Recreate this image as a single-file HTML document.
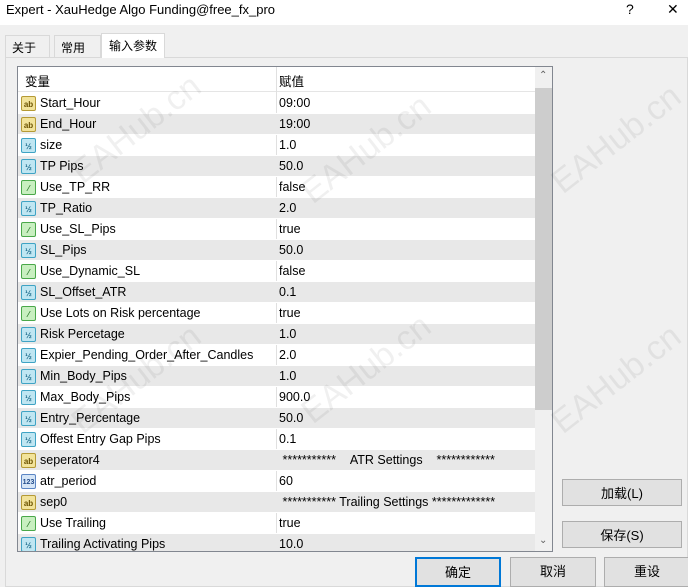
<!DOCTYPE html><html><head><meta charset="utf-8"><style>
*{margin:0;padding:0;box-sizing:border-box}
body{width:688px;height:583px;overflow:hidden;background:#f0f0f0;font-family:"Liberation Sans","Noto Sans CJK SC",sans-serif;font-size:12.5px;color:#000;position:relative}
.title{position:absolute;left:0;top:0;width:688px;height:25px;background:#fff;font-size:13px;padding:2px 0 0 6px}
.tb{position:absolute;top:1px;font-size:14px}
.tab{position:absolute;top:35px;height:22px;border:1px solid #d9d9d9;border-bottom:none;background:#f0f0f0;padding:3px 0 0 6px;font-size:12px}
.panel{position:absolute;left:5px;top:57px;width:683px;height:530px;border:1px solid #d9d9d9;background:#f0f0f0}
.grid{position:absolute;left:17px;top:66px;width:536px;height:486px;border:1px solid #828790;background:#fff;overflow:hidden}
.row{position:absolute;left:0;width:517px;height:21px;border-bottom:1px solid #fff}
.row.g{background:#e8e8e8}
.row span{position:absolute;top:3px}
.n{left:22px}.v{left:261px}
.col{position:absolute;left:258px;top:0;width:1px;height:486px;background:#e0e0e0}
.ic{position:absolute;left:3px;top:3px;width:15px;height:15px;border-radius:2px;font-size:8px;line-height:15px;text-align:center;font-weight:bold}
.ab{background:#f2e39a;border:1px solid #b59a35;color:#6b5200}
.hv{background:#bfe6f2;border:1px solid #3fa3c4;color:#1b6a8a}
.bo{background:#c8efc0;border:1px solid #4aa84a;color:#2a7a2a}
.n3{background:#d6e6f7;border:1px solid #5c86c4;color:#234d8c;font-size:7px}
.sb{position:absolute;left:517px;top:0;width:17px;height:486px;background:#f0f0f0}
.th{position:absolute;left:0;top:21px;width:17px;height:322px;background:#cdcdcd}
.btn{position:absolute;background:#e1e1e1;border:1px solid #adadad;text-align:center;font-size:13px;padding-top:3px}
.wm{position:absolute;color:rgba(0,0,0,0.06);font-size:34px;transform:rotate(-38deg);white-space:nowrap;font-family:"Liberation Sans",sans-serif}
</style></head><body>
<div class="title">Expert - XauHedge Algo Funding@free_fx_pro</div>
<div class="tb" style="left:626px">?</div><div class="tb" style="left:667px">✕</div>
<div class="panel"></div>
<div class="tab" style="left:5px;width:45px">关于</div>
<div class="tab" style="left:54px;width:47px">常用</div>
<div class="tab" style="left:101px;top:33px;height:25px;width:64px;background:#fff;padding-left:7px">输入参数</div>
<div class="grid">
<div class="row" style="top:0;height:25px;background:#fff;border-bottom:1px solid #e5e5e5"><span class="n" style="left:7px;top:4px">变量</span><span class="v" style="top:4px">赋值</span></div>
<div class="col"></div>
<div id="rows"></div>
<div class="sb"><div style="position:absolute;top:3px;left:4px;font-size:10px;color:#606060">⌃</div><div class="th"></div><div style="position:absolute;top:468px;left:4px;font-size:10px;color:#606060">⌄</div></div>
</div>
<div class="btn" style="left:562px;top:479px;width:120px;height:27px">加载(L)</div>
<div class="btn" style="left:562px;top:521px;width:120px;height:27px">保存(S)</div>
<div class="btn" style="left:415px;top:557px;width:86px;height:30px;border:2px solid #0078d7">确定</div>
<div class="btn" style="left:510px;top:557px;width:86px;height:30px">取消</div>
<div class="btn" style="left:604px;top:557px;width:86px;height:30px">重设</div>
<div class="wm" style="left:60px;top:110px">EAHub.cn</div>
<div class="wm" style="left:290px;top:130px">EAHub.cn</div>
<div class="wm" style="left:540px;top:120px">EAHub.cn</div>
<div class="wm" style="left:290px;top:350px">EAHub.cn</div>
<div class="wm" style="left:540px;top:360px">EAHub.cn</div>
<div class="wm" style="left:60px;top:360px">EAHub.cn</div>
<script>
var d=[["ab","Start_Hour","09:00"],["ab","End_Hour","19:00"],["hv","size","1.0"],["hv","TP Pips","50.0"],["bo","Use_TP_RR","false"],["hv","TP_Ratio","2.0"],["bo","Use_SL_Pips","true"],["hv","SL_Pips","50.0"],["bo","Use_Dynamic_SL","false"],["hv","SL_Offset_ATR","0.1"],["bo","Use Lots on Risk percentage","true"],["hv","Risk Percetage","1.0"],["hv","Expier_Pending_Order_After_Candles","2.0"],["hv","Min_Body_Pips","1.0"],["hv","Max_Body_Pips","900.0"],["hv","Entry_Percentage","50.0"],["hv","Offest Entry Gap Pips","0.1"],["ab","seperator4","&nbsp;***********&nbsp;&nbsp;&nbsp;&nbsp;ATR Settings&nbsp;&nbsp;&nbsp;&nbsp;************"],["n3","atr_period","60"],["ab","sep0","&nbsp;*********** Trailing Settings *************"],["bo","Use Trailing","true"],["hv","Trailing Activating Pips","10.0"]];
var t={ab:"ab",hv:"½",bo:"⁄",n3:"123"},h="";
d.forEach(function(r,i){h+='<div class="row'+(i%2?' g':'')+'" style="top:'+(26+21*i)+'px"><div class="ic '+r[0]+'">'+t[r[0]]+'</div><span class="n">'+r[1]+'</span><span class="v">'+r[2]+'</span></div>';});
document.getElementById("rows").innerHTML=h;
</script>
</body></html>
